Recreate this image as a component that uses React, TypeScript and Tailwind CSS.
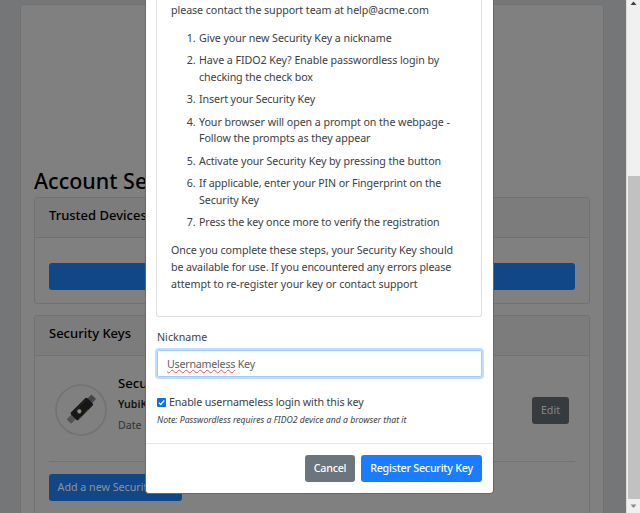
import React from "react";

type Line = { text: string; tight?: boolean };

const steps: Line[][] = [
  [{ text: "Give your new Security Key a nickname" }],
  [{ text: "Have a FIDO2 Key? Enable passwordless login by" }, { text: "checking the check box", tight: true }],
  [{ text: "Insert your Security Key", tight: true }],
  [{ text: "Your browser will open a prompt on the webpage -" }, { text: "Follow the prompts as they appear" }],
  [{ text: "Activate your Security Key by pressing the button" }],
  [{ text: "If applicable, enter your PIN or Fingerprint on the", tight: true }, { text: "Security Key" }],
  [{ text: "Press the key once more to verify the registration", tight: true }],
];

function KeyPhoto() {
  return (
    <svg viewBox="0 0 52 52" className="h-[52px] w-[52px] shrink-0">
      <circle cx="26" cy="26" r="25" fill="none" stroke="#717273" strokeWidth="1.6" />
      <g transform="translate(26 25.5) rotate(-45)">
        <rect x="-17" y="-3.2" width="8" height="6.4" rx="1" fill="#505050" />
        <path d="M-15 -1.5h4M-15 1.5h4" stroke="#686868" strokeWidth=".7" />
        <rect x="11" y="-3.2" width="7" height="6.4" rx=".6" fill="#424242" />
        <path d="M13 -1.5h4M13 1.5h4" stroke="#5b5b5b" strokeWidth=".7" />
        <rect x="-10.5" y="-5" width="23" height="10.5" rx="1.5" fill="#161616" />
        <path d="M-8 5.2h3M1 5.2h4" stroke="#5a401b" strokeWidth="1" />
        <path d="M-4 -3.5h14" stroke="#262626" strokeWidth="1" />
        <circle cx="-2.4" cy="0" r="2.4" fill="#6c5332" />
        <circle cx="-2.4" cy="0" r="1.7" fill="#8e8e8a" />
      </g>
    </svg>
  );
}

function Page() {
  return (
    <div className="h-[513px] w-[626px] bg-[#747678] pl-5 pt-1">
      <main className="flex h-[509px] w-[584px] flex-col rounded-t-[3px] border border-b-0 border-[#707173] bg-[#808080] pl-[13px] pr-[13px]">
        <h1 className="mt-[160px] flex h-[32px] w-[112px] items-center overflow-hidden whitespace-nowrap text-[21.5px] font-medium text-black">
          Account Se
        </h1>
        <section className="h-[107px] shrink-0 rounded-[3px] border border-[#717171]">
          <h2 className="flex h-10 items-center border-b border-[#717171] bg-[#7c7c7c] pb-1 pl-[14px] text-[13px] font-medium text-black">
            Trusted Devices
          </h2>
          <div className="px-[14px] pt-[25px]">
            <div className="h-[27px] rounded-[3px] bg-[#124787]" />
          </div>
        </section>
        <section className="mt-[11px] flex-1 rounded-t-[3px] border border-b-0 border-[#717171]">
          <h2 className="flex h-10 items-center border-b border-[#717171] bg-[#7c7c7c] pb-1 pl-[14px] text-[13px] font-medium text-black">
            Security Keys
          </h2>
          <div className="mx-[14px]">
            <div className="flex h-[106px] items-center border-b border-[#727272] pl-[6px] pr-[6px] pt-[3px]">
              <KeyPhoto />
              <div className="-mt-[13px] ml-[11px] flex-1 whitespace-nowrap">
                <div className="h-[21px] text-[13.2px] font-medium leading-[20px] text-black">Secu</div>
                <div className="h-5 text-[10.6px] font-semibold leading-[20px] text-[#111]">YubiK</div>
                <div className="h-5 text-[10.6px] leading-[22px] text-[#303234]">Date</div>
              </div>
              <div className="flex h-[27px] w-[37px] items-center justify-center rounded-[3px] bg-[#363b40] text-[10.7px] text-[#858585]">
                Edit
              </div>
            </div>
            <div className="mt-3 flex h-[27px] w-[133px] items-center justify-center whitespace-nowrap rounded-[3px] bg-[#124787] text-[10.7px] text-[#8d9399]">
              Add a new Security Key
            </div>
          </div>
        </section>
      </main>
    </div>
  );
}

function ScrollBar() {
  return (
    <div className="flex h-[513px] w-[14px] flex-col border-l border-[#dcdcdc] bg-[#f0f0f0]">
      <svg viewBox="0 0 13 176" className="h-[176px] w-[13px]">
        <path d="M3.5 5 L6.5 1.5 L9.5 5z" fill="#404040" />
      </svg>
      <div className="ml-px h-[323px] w-3 bg-[#c1c1c1]" />
      <svg viewBox="0 0 13 14" className="h-[14px] w-[13px]">
        <path d="M3.5 5.5 L6.5 9 L9.5 5.5z" fill="#8b8b8b" />
      </svg>
    </div>
  );
}

function Dialog() {
  return (
    <div role="dialog" className="absolute left-[145px] top-0 flex h-[494px] w-[349px] flex-col rounded-b-[4px] border border-t-0 border-[#686868] bg-white text-[#3b4044]">
      <div className="ml-[10px] h-[317px] w-[326px] shrink-0 whitespace-nowrap rounded-b-[3px] border border-t-0 border-[#dfdfdf] pl-[14px] pt-[1.6px] text-[10.7px] leading-[16.8px] tracking-[-0.07px]">
        <p>please contact the support team at help@acme.com</p>
        <ol className="mt-[11.2px]">
          {steps.map((lines, i) => (
            <li key={i} className="mb-[5.6px] flex">
              <span className="w-[24.5px] text-right">{i + 1}.</span>
              <span className="ml-[3.5px]">
                {lines.map((l) => (
                  <span key={l.text} className={l.tight ? "block tracking-[-0.12px]" : "block"}>
                    {l.text}
                  </span>
                ))}
              </span>
            </li>
          ))}
        </ol>
        <p className="mt-[11.2px]">
          Once you complete these steps, your Security Key should
          <br />
          <span className="tracking-[-0.14px]">be available for use. If you encountered any errors please</span>
          <br />
          attempt to re-register your key or contact support
        </p>
      </div>
      <label className="ml-[11px] mt-[12px] h-4 text-[10.7px] leading-4">Nickname</label>
      <div className="ml-[11px] mt-[5px] h-[27px] w-[325px] shrink-0 rounded-[2px] border border-[#9fccff] pl-[9px] text-[10.7px] leading-[27px] tracking-[-0.24px] text-[#5c6166] ring-2 ring-[#bfdeff]">
        <span className="underline decoration-[#ee5555] decoration-wavy decoration-[0.5px] underline-offset-1">Usernameless</span> Key
      </div>
      <div className="ml-[11px] mt-[17px] flex h-4 items-center text-[10.7px] leading-4 tracking-[-0.13px]">
        <svg viewBox="0 0 9 9" className="mr-[3px] h-[9px] w-[9px]">
          <rect width="9" height="9" rx="1" fill="#0b6fe8" />
          <path d="M1.8 4.6 3.7 6.5 7.3 2.5" fill="none" stroke="white" strokeWidth="1.3" />
        </svg>
        Enable usernameless login with this key
      </div>
      <p className="ml-[11px] mt-[3px] whitespace-nowrap text-[8.7px] italic leading-[14px]">Note: Passwordless requires a FIDO2 device and a browser that it</p>
      <div className="mt-auto flex h-[50px] shrink-0 items-start justify-end gap-[6px] border-t border-[#e4e6e8] pr-[11px] pt-[11px] text-[10.7px] font-medium tracking-[-0.22px] text-white">
        <button className="h-[27px] w-[50px] rounded-[3px] bg-[#6c757d]">Cancel</button>
        <button className="h-[27px] w-[121px] rounded-[3px] bg-[#1a7dff]">Register Security Key</button>
      </div>
    </div>
  );
}

export default function App() {
  return (
    <div className="relative flex h-[513px] w-[640px] overflow-hidden font-['Noto_Sans','Open_Sans',sans-serif]">
      <Page />
      <ScrollBar />
      <Dialog />
    </div>
  );
}
